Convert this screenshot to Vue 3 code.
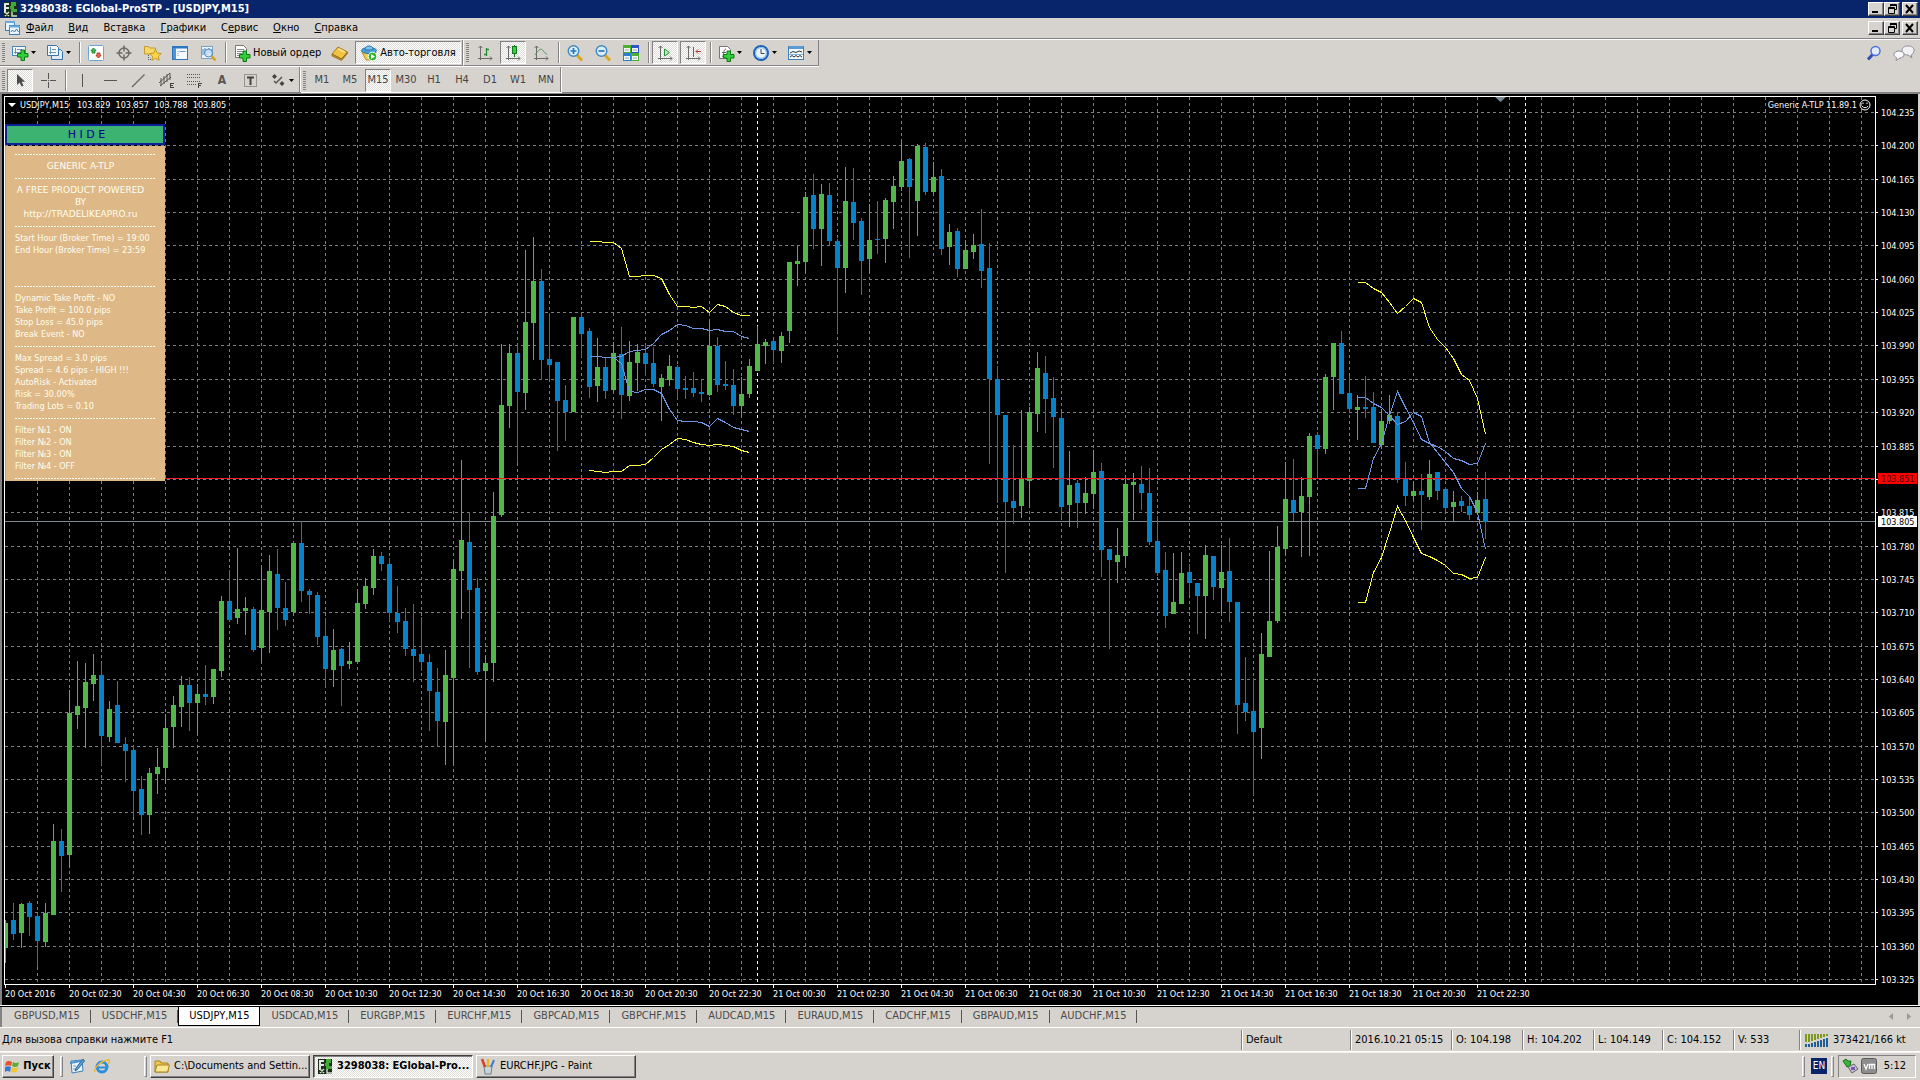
<script setup>
const icons = {
  logo: '<rect x="1" y="1" width="14" height="15" fill="#1d2b1d"/><path d="M2 2h5v2H4v2h3v2H4v4H2z" fill="#dfe8dc"/><path d="M9 1h5v4h-2v3h3v3H9V8H8V5h1z" fill="#3faa35"/><path d="M3 11l4 4M7 11l-4 4M10 11v4h5" stroke="#cfe8c8" stroke-width="1.4" fill="none"/>',
  chartWin: '<rect x="1.500" y="1.500" width="9" height="9" fill="#eaf4fc" stroke="#3c80bd"/><path d="M1 2h10" stroke="#6aa9dc" stroke-width="2"/><rect x="5.500" y="5.500" width="10" height="9" fill="#eaf4fc" stroke="#3c80bd"/><path d="M5 6.500h11" stroke="#6aa9dc" stroke-width="2"/><path d="M7 12l1.500-2 2 2 2-3 2 3" stroke="#3c80bd" fill="none"/>',
  newChart: '<rect x=".5" y="1.500" width="13" height="9" fill="#f4f9fd" stroke="#4a86ba"/><path d="M3.500 3v6M2 7.500h9M5 4.500h5" stroke="#6b93b5" fill="none"/><path d="M9 5h3.500v3.500H16V12h-3.500v3.500H9V12H5.500V8.500H9z" fill="#2fd038" stroke="#0b7a14"/>',
  profiles: '<path d="M4.500 4.500h9l2 2v8h-11z" fill="#dcebf7" stroke="#3c74a8"/><path d="M.5.5h9l2 2v8H.5z" fill="#f4f9fd" stroke="#3c74a8"/><path d="M3.500 2v7M2 7.500h7M5 4.500h4" stroke="#6b93b5" fill="none"/>',
  market: '<rect x=".5" y=".5" width="15" height="15" rx="1" fill="#fff" stroke="#6aa6dc"/><path d="M5.500 3L8 5.500H7V8H4V5.500H3z" fill="#3cc04a" stroke="#15762a" stroke-width=".8"/><path d="M10.500 13L8 10.500h1V8h3v2.500h1z" fill="#f0684a" stroke="#a82a16" stroke-width=".8"/>',
  cross: '<circle cx="8" cy="8" r="5" fill="none" stroke="#6a6a6a" stroke-width="1.500"/><path d="M8 .5v6M8 9.500v6M.5 8h6M9.500 8h6" stroke="#6a6a6a" stroke-width="1.500"/>',
  favorites: '<path d="M.5 1.500h4l1 1.500h6v6H.5z" fill="#f6d869" stroke="#c39a2c"/><path d="M4.500 10v5M4 14.500h3" stroke="#555" stroke-dasharray="1 1"/><path d="M11.500 4.500l1.700 3.600 4 .5-2.900 2.700.8 4-3.600-2-3.600 2 .7-4-2.800-2.700 4-.5z" fill="#fbd743" stroke="#b98a1a" stroke-width=".8"/>',
  terminal: '<rect x=".5" y="1.500" width="15" height="13" fill="#f4faff" stroke="#2e77bd"/><path d="M1 2.500h14" stroke="#2e77bd" stroke-width="2"/><rect x="1" y="3" width="3" height="11" fill="#4d94d6"/><path d="M5.500 6.500h1m1 0h6M5.500 8.500h1M5.500 10.500h1" stroke="#6f9cc4"/>',
  tester: '<rect x="1.500" y="1.500" width="11" height="12" fill="#f0f6fb" stroke="#7aa2c6"/><path d="M3 4v6M5 3v6M7 5v5M9 3v5M11 4v5" stroke="#3c80bd"/><circle cx="8.500" cy="8" r="4" fill="#cfe6f7" fill-opacity=".8" stroke="#4a88bf"/><path d="M11.500 11l4 4.500" stroke="#d3a21d" stroke-width="2.500"/>',
  newOrder: '<path d="M1.500.5h8l3 3v9h-11z" fill="#fff" stroke="#777"/><path d="M3 4.500h7M3 6.500h8M3 8.500h5M3 10.500h5" stroke="#888"/><path d="M9 6h3.500v3.500H16V13h-3.500v3.500H9V13H5.500V9.500H9z" fill="#2fd038" stroke="#0b7a14"/>',
  book: '<path d="M6 2l9.500 5-6 7L0 9z" fill="#f2c443" stroke="#a8791a"/><path d="M0 9v2l9.500 4.500 6-7V7l-6 7z" fill="#c98e20" stroke="#8d6414" stroke-width=".7"/><path d="M6.500 4l6 3" stroke="#fbe69a" stroke-width="1.500"/>',
  auto: '<path d="M1 7l7-2 7 2-4 8H5z" fill="#f0cf4f" stroke="#b58f1c"/><ellipse cx="8" cy="5.500" rx="7.500" ry="3" fill="#4aa4dc" stroke="#2a6fa5"/><path d="M4 4c0-4 8-4 8 0v1H4z" fill="#7cc4ee" stroke="#2a6fa5"/><circle cx="11.500" cy="11.500" r="4.300" fill="#29b42e" stroke="#fff"/><path d="M10 9l4 2.500-4 2.500z" fill="#fff"/>',
  bars: '<path d="M3.500 1v14M1 13.500h14M1.500 3l2-2 2 2M13 11.500l2 2-2 2" stroke="#6b6b6b" fill="none"/><path d="M9.500 3v8M9.500 4.500H12M7 9.500h2.500" stroke="#278a35" stroke-width="1.300" fill="none"/>',
  candles: '<path d="M3.500 1v14M1 13.500h14M1.500 3l2-2 2 2M13 11.500l2 2-2 2" stroke="#6b6b6b" fill="none"/><path d="M9.500 0v12" stroke="#14791d"/><rect x="7.500" y="1.500" width="4" height="7" fill="#2ed43a" stroke="#14791d"/>',
  lineChart: '<path d="M3.500 1v14M1 13.500h14M1.500 3l2-2 2 2M13 11.500l2 2-2 2" stroke="#6b6b6b" fill="none"/><path d="M2 10C6 4 8 3 10 5.500c1 2 2 2 4 4" stroke="#4c9a57" fill="none"/>',
  zoomIn: '<path d="M10 10l5 5.500" stroke="#d8a822" stroke-width="3"/><circle cx="6.500" cy="6" r="5.300" fill="#d9eefb" stroke="#3f88c5" stroke-width="1.400"/><path d="M3.500 6h6M6.500 3v6" stroke="#2c75b8" stroke-width="1.700"/>',
  zoomOut: '<path d="M10 10l5 5.500" stroke="#d8a822" stroke-width="3"/><circle cx="6.500" cy="6" r="5.300" fill="#d9eefb" stroke="#3f88c5" stroke-width="1.400"/><path d="M3.500 6h6" stroke="#2c75b8" stroke-width="1.700"/>',
  tile: '<rect width="8" height="8" fill="#4caf32"/><rect x="8" width="8" height="8" fill="#2b55c8"/><rect y="8" width="8" height="8" fill="#2b7ed0"/><rect x="8" y="8" width="8" height="8" fill="#4caf32"/><path d="M1 3h6v4H1zM9 3h6v4H9zM1 11h6v4H1zM9 11h6v4H9z" fill="#f1f8f1"/><path d="M2 5h4M10 5h4M2 13h4M10 13h4" stroke="#9ab"/>',
  scroll: '<path d="M3.500 1v14M1 13.500h14M1.500 3l2-2 2 2M13 11.500l2 2-2 2" stroke="#6b6b6b" fill="none"/><path d="M7.500 4l5 3.500-5 3.500z" fill="#bfe6c2" stroke="#2c9438"/>',
  shift: '<path d="M3.500 1v14M1 13.500h14M1.500 3l2-2 2 2M13 11.500l2 2-2 2" stroke="#6b6b6b" fill="none"/><path d="M8.500 2v10" stroke="#666"/><path d="M16 6.500h-5M13 4.500l-2 2 2 2" stroke="#b5382a" fill="none"/>',
  indicators: '<path d="M1.500 1.500h8l3 3v9h-11z" fill="#fff" stroke="#777"/><path d="M4 12c2 0 1-8 4-8M4 7.500h4" stroke="#666" fill="none"/><path d="M9 6h3.500v3.500H16V13h-3.500v3.500H9V13H5.500V9.500H9z" fill="#2fd038" stroke="#0b7a14"/>',
  clock: '<circle cx="8" cy="8" r="7" fill="#fff" stroke="#1f63b8" stroke-width="2"/><circle cx="8" cy="8" r="5.400" fill="#eaf4fd" stroke="#6fb0ea"/><path d="M8 4v4.500h3.500" stroke="#444" fill="none"/>',
  template: '<rect x=".5" y="1.500" width="15" height="13" fill="#f2f8fd" stroke="#3c80bd"/><path d="M1 2.500h14" stroke="#5b9ad4" stroke-width="3"/><path d="M2 8l3-1.500 3 1 3-1.500 3 1M2 12l2-1.500 2 1.500 2-1.500 2 1.500 2-1.500 2 1.500" stroke="#333" fill="none"/><path d="M1 9.500h14" stroke="#8bb4d8"/>',
  cursor: '<path d="M5 2v11l2.600-2.400L9.500 14.500l2-1-1.900-3.800H13z" fill="#4a4a4a"/>',
  plus: '<path d="M8.500 1v6M8.500 10v6M1 8.500h6M10 8.500h6M8 8.500h1" stroke="#555"/>',
  vline: '<path d="M8.500 2v13" stroke="#555"/>',
  hline: '<path d="M2 8.500h13" stroke="#555"/>',
  trend: '<path d="M2 15L14.500 2.500" stroke="#666" stroke-width="1.200"/>',
  channel: '<path d="M1 11L12 1M2 14L13 5M3 6v8M6 4v8M9 2v8M12 1v7" stroke="#555" fill="none"/><path d="M12.500 11v5M12 11.500h4M12 13.500h3M12 15.500h4" stroke="#444" fill="none"/>',
  fibo: '<path d="M1 2.500h14M1 5.500h14M1 9.500h14M1 12.500h9" stroke="#555" stroke-dasharray="1 1"/><path d="M12.500 11v5M12 11.500h4M12 13.500h3" stroke="#444" fill="none"/>',
  textLabel: '<rect x="2.500" y="2.500" width="12" height="12" fill="none" stroke="#555" stroke-dasharray="1 1"/><path d="M5 5.500h7M8.500 5v8" stroke="#444" stroke-width="2"/>',
  arrows: '<path d="M4.500 2L7 4.500 4.500 7 2 4.500zM12 9l2.500 2.500L12 14l-2.500-2.500z" fill="#444"/><path d="M4 9l2 2 6-6" stroke="#555" stroke-width="1.500" fill="none"/>',
  search: '<path d="M7 9l-5 5.500" stroke="#2f4fb8" stroke-width="3"/><circle cx="9.500" cy="6" r="4.500" fill="#e3ebfb" stroke="#4a72d8" stroke-width="1.500"/>',
  note: '<path d="M2 3l11-1 1 11-11 2z" fill="#e9f3fb" stroke="#3f7fb5"/><path d="M1 5l11-2" stroke="#4d93cc" stroke-width="2"/><path d="M14 1L7 10l-1 3 2.500-1.500L15.500 3z" fill="#5aa3dd" stroke="#2d6596"/><path d="M4 8h3M4 11h2" stroke="#6b9cc2"/>',
  ie: '<circle cx="8" cy="9" r="5" fill="none" stroke="#2b8fdc" stroke-width="3"/><path d="M4 9.500h10" stroke="#2b8fdc" stroke-width="2"/><path d="M1 14C-1 10 8 2 15 2c1 1 0 3-1 4" stroke="#efb62f" stroke-width="1.300" fill="none"/>',
  folder: '<path d="M1 3h5l1 2h7v9H1z" fill="#efc94c" stroke="#a9821c"/><path d="M3 7h12.500l-2 7H1z" fill="#fbe894" stroke="#a9821c"/>',
  paint: '<path d="M4 8h8l-1 8H5z" fill="#c8d4dc" stroke="#71808a"/><path d="M5 9L2 1" stroke="#d3402e" stroke-width="2.500"/><path d="M8 9V1" stroke="#e9b72c" stroke-width="2.500"/><path d="M11 9l3-7" stroke="#3b7fc9" stroke-width="2"/>',
  flag: '<path d="M1 4q3-2 6 0l-1 4q-3-1.500-6 0z" fill="#e8502c"/><path d="M8 4q3 2 6 0l-1 4q-3 2-6 0z" fill="#5fae34"/><path d="M0 9q3-1.500 6 0l-1 5q-2.500-2-5 0z" fill="#3478d8"/><path d="M7 9q3 2 6 0l-1 4.500q-3 2-6 0z" fill="#f3c52f"/>',
  plug: '<path d="M1 3l3-2 2 2 3 0-1 5-3 1z" fill="#37b53a" stroke="#1d6e20"/><path d="M6 9l6-3 4 5-6 4z" fill="#c3c3d0" stroke="#666"/><rect x="9" y="9" width="4" height="3" fill="#7b59b8"/>',
  vm: '<rect x=".5" y=".5" width="15" height="15" rx="2" fill="#8d8d8d" stroke="#5c5c5c"/><path d="M3 6l2 5 2-5M8.500 11V6.500h5V11M11 7v4" stroke="#fff" stroke-width="1.300" fill="none"/>',
  net: '<path d="M1 1v8M4 1v8M7 1v7M10 1v6M13 1v5M16 1v4M19 1v3M22 1v2" stroke="#7d9a1e" stroke-width="2"/><path d="M1 14v-3M4 14v-3M7 14v-4M10 14V9M13 14V8M16 14V7M19 14V6M22 14V5" stroke="#1d5f96" stroke-width="2"/>'
}

const menus = [['', 'Ф', 'айл'], ['', 'В', 'ид'], ['Вст', 'а', 'вка'], ['', 'Г', 'рафики'], ['С', 'е', 'рвис'], ['', 'О', 'кно'], ['', 'С', 'правка']]
const mainTools = [
  { i: 'newChart', t: 'Новый график', drop: 1 }, { i: 'profiles', t: 'Профили', drop: 1 }, { sep: 1 },
  { i: 'market', t: 'Обзор рынка' }, { i: 'cross', t: 'Окно данных' }, { i: 'favorites', t: 'Навигатор' }, { i: 'terminal', t: 'Терминал' }, { i: 'tester', t: 'Тестер стратегий' }, { sep: 1 },
  { i: 'newOrder', t: 'Новый ордер', label: 1 }, { i: 'book', t: 'MetaEditor' }, { i: 'auto', t: 'Авто-торговля', label: 1, on: 1 }
]
const viewTools = [
  { i: 'bars', t: 'Бары' }, { i: 'candles', t: 'Свечи', on: 1 }, { i: 'lineChart', t: 'Линия' }, { sep: 1 },
  { i: 'zoomIn', t: 'Увеличить' }, { i: 'zoomOut', t: 'Уменьшить' }, { i: 'tile', t: 'Упорядочить окна' }, { sep: 1 },
  { i: 'scroll', t: 'Автопрокрутка', on: 1 }, { i: 'shift', t: 'Сдвиг графика', on: 1 }, { sep: 1 },
  { i: 'indicators', t: 'Индикаторы', drop: 1 }, { i: 'clock', t: 'Периоды', drop: 1 }, { i: 'template', t: 'Шаблоны', drop: 1 }
]
const drawTools = [
  { i: 'cursor', t: 'Курсор', on: 1 }, { i: 'plus', t: 'Перекрестие' }, { sep: 1 }, { i: 'vline', t: 'Вертикальная линия' },
  { i: 'hline', t: 'Горизонтальная линия' }, { i: 'trend', t: 'Трендовая линия' }, { i: 'channel', t: 'Канал' }, { i: 'fibo', t: 'Фибоначчи' },
  { text: 'A', t: 'Текст', bold: 1 }, { i: 'textLabel', t: 'Метка' }, { i: 'arrows', t: 'Стрелки', drop: 1 }
]
const periodTools = ['M1', 'M5', 'M15', 'M30', 'H1', 'H4', 'D1', 'W1', 'MN'].map(p => ({ text: p, t: p, on: p === 'M15' }))
const toolRows = [[mainTools, viewTools], [drawTools, periodTools]]

const tabs = ['GBPUSD', 'USDCHF', 'USDJPY', 'USDCAD', 'EURGBP', 'EURCHF', 'GBPCAD', 'GBPCHF', 'AUDCAD', 'EURAUD', 'CADCHF', 'GBPAUD', 'AUDCHF']
const cells = [
  ['Default', 109], ['2016.10.21 05:15', 101], ['O: 104.198', 71], ['H: 104.202', 71], ['L: 104.149', 69], ['C: 104.152', 71], ['V: 533', 66]
]

const panel = [
  '-', ['GENERIC A-TLP'], '-', ['A FREE PRODUCT POWERED'], ['BY'], ['http://TRADELIKEAPRO.ru'], '-',
  'Start Hour (Broker Time) = 19:00', 'End Hour (Broker Time) = 23:59', '', '', '-',
  'Dynamic Take Profit - NO', 'Take Profit = 100.0 pips', 'Stop Loss = 45.0 pips', 'Break Event - NO', '-',
  'Max Spread = 3.0 pips', 'Spread = 4.6 pips - HIGH !!!', 'AutoRisk - Activated', 'Risk = 30.00%', 'Trading Lots = 0.10', '-',
  'Filter №1 - ON', 'Filter №2 - ON', 'Filter №3 - ON', 'Filter №4 - OFF', '-'
]

// Vertical grid step is 0.035 in price, first level is 104.235
const levelY = n => Math.round(112 + n * 33.35)
const levels = Array.from({ length: 27 }, (_, n) => ({ y: levelY(n), label: (104.235 - n * 0.035).toFixed(3) }))
const columns = Array.from({ length: 118 }, (_, n) => 37 + n * 32)
const hours = ['00:30', '02:30', '04:30', '06:30', '08:30', '10:30', '12:30', '14:30', '16:30', '18:30', '20:30', '22:30']
const dates = ['20 Oct 2016', ...hours.slice(1).map(h => '20 Oct ' + h), ...hours.map(h => '21 Oct ' + h)]

// [rising, high, body top, body bottom, low]
const candles = [
  [1,920,923,948,963],[0,903,920,934,940],[1,903,904,933,948],[0,901,903,917,936],[0,913,916,941,967],[1,903,913,942,947],[1,824,841,915,915],[0,829,841,856,892],
  [1,690,713,855,867],[1,661,706,715,729],[1,663,682,708,748],[1,654,675,684,701],[0,663,675,736,765],[1,701,709,737,742],[0,681,705,743,743],[0,737,744,751,782],
  [0,746,750,791,817],[0,776,789,815,835],[1,768,773,815,834],[1,748,767,774,794],[1,714,728,768,783],[1,696,705,727,748],[1,676,685,707,727],[0,677,685,703,731],
  [1,684,694,703,734],[0,665,694,697,705],[1,669,669,697,704],[1,596,601,671,677],[0,570,601,620,621],[1,548,609,618,624],[1,597,608,611,635],[0,607,609,650,652],
  [1,568,610,648,662],[1,555,571,612,653],[0,549,574,608,630],[0,582,608,620,626],[1,543,543,612,614],[0,521,543,591,602],[0,589,591,595,614],[0,592,595,637,645],
  [0,618,636,669,687],[1,629,650,670,687],[0,648,649,666,706],[1,642,661,664,669],[1,592,603,662,663],[1,578,586,604,609],[1,549,556,588,595],[0,552,556,564,571],
  [0,558,564,613,621],[0,586,613,622,633],[0,608,621,649,656],[0,604,649,656,682],[0,617,654,662,671],[0,654,662,691,731],[0,668,692,721,746],[1,650,675,722,765],
  [1,561,569,678,765],[1,460,540,571,619],[0,512,542,590,668],[0,578,588,672,675],[1,655,663,671,742],[1,492,516,663,682],[1,344,405,515,517],[1,344,353,406,428],
  [0,345,353,392,463],[1,250,322,393,410],[1,237,281,323,360],[0,269,281,360,380],[0,313,359,365,380],[0,362,362,401,451],[0,385,400,412,441],[1,317,317,412,412],
  [0,314,317,334,357],[0,328,331,387,398],[1,338,367,386,402],[0,358,367,391,399],[1,342,353,390,392],[0,327,354,395,419],[1,341,362,396,401],[1,344,352,363,391],
  [0,345,353,364,376],[0,347,363,384,387],[1,374,378,387,421],[1,355,366,380,386],[0,365,367,389,399],[0,376,388,390,399],[0,372,388,393,397],[0,380,392,394,402],
  [1,322,346,395,396],[0,337,346,385,392],[0,361,384,386,390],[0,369,385,406,415],[1,377,394,406,415],[1,359,366,394,398],[1,326,344,371,371],[1,339,342,346,364],
  [0,340,341,350,363],[1,332,336,351,363],[1,262,262,331,343],[1,245,261,264,286],[1,192,197,262,273],[0,174,195,229,249],[1,184,194,229,266],[0,183,195,241,245],
  [0,239,241,268,333],[1,167,201,268,293],[0,168,202,223,240],[0,218,221,261,295],[1,204,240,259,273],[0,201,239,240,254],[1,198,200,239,263],[1,176,186,202,229],
  [1,142,161,187,191],[0,158,159,187,258],[1,144,146,201,236],[0,143,147,192,195],[1,162,177,192,194],[0,169,176,249,255],[1,224,232,247,265],[0,228,231,269,277],
  [1,240,250,269,269],[1,234,245,252,259],[0,209,244,271,288],[0,243,268,379,464],[0,366,379,415,503],[0,415,415,502,573],[0,445,501,508,524],[1,410,478,506,518],
  [1,407,412,481,508],[1,352,368,414,432],[0,356,373,399,433],[0,377,398,417,468],[0,413,418,507,519],[1,451,485,505,527],[0,480,483,503,528],[1,477,493,503,514],
  [1,450,472,494,509],[0,463,471,550,577],[0,549,549,560,649],[1,528,555,562,583],[1,475,484,556,566],[1,473,482,485,520],[0,466,484,493,510],[0,468,493,542,545],
  [0,516,541,573,576],[0,552,570,616,628],[1,553,602,614,614],[1,552,573,604,604],[0,564,572,583,595],[0,583,583,596,634],[1,545,555,596,639],[0,556,556,587,600],
  [1,545,572,588,614],[0,538,571,602,622],[0,602,602,705,734],[0,657,703,712,721],[0,678,711,732,795],[1,633,654,728,759],[1,551,621,657,657],[1,526,547,621,623],
  [1,462,499,549,555],[0,459,500,513,521],[1,477,496,512,557],[1,433,436,497,556],[0,432,435,449,479],[1,374,377,449,454],[1,343,343,377,410],[0,331,343,394,394],
  [0,376,393,409,412],[1,395,407,410,440],[0,376,407,409,418],[0,392,407,443,443],[1,409,421,445,449],[1,395,415,421,424],[0,413,416,480,483],[0,462,479,496,506],
  [1,482,491,496,500],[0,474,491,495,530],[1,460,474,497,500],[0,472,472,491,500],[0,487,489,508,511],[1,491,502,507,522],[0,496,501,506,512],[0,496,506,515,520],
  [1,492,500,513,515],[0,472,499,522,539]
].map(([up, high, top, bottom, low], k) => ({ x: 5 + k * 8, up, high, top, bottom, low }))

// Indicator bands: colour class, first candle index, one level per candle
const bands = [
  ['outer', 73, [241,241,242,242,248,276,276,275,275,278,294,306,306,307,306,312,304,306,312,315,315]],
  ['inner', 73, [356,356,357,357,356,351,350,349,343,334,330,324,325,328,328,330,329,331,331,336,338]],
  ['inner', 73, [356,356,357,357,363,391,392,389,389,393,409,420,421,421,422,426,418,422,427,429,431]],
  ['outer', 73, [470,471,472,471,471,465,465,464,457,449,444,438,439,442,444,445,444,445,446,450,452]],
  ['outer', 169, [282,282,288,292,302,313,306,298,302,327,339,347,358,374,380,398,434]],
  ['outer', 169, [602,602,572,557,532,506,520,537,553,556,560,565,573,574,578,577,557]],
  ['inner', 169, [397,397,403,407,415,424,421,412,416,442,452,462,472,488,496,512,549]],
  ['inner', 169, [488,488,458,443,415,391,407,422,439,443,446,451,458,460,464,463,443]]
].map(([kind, start, ys]) => ({ kind, points: ys.map((y, n) => `${5 + (start + n) * 8},${y}`).join(' ') }))
</script>

<template>
  <div class="screen">
    <header class="titlebar">
      <svg class="ico" viewBox="0 0 16 16" v-html="icons.logo"></svg>
      <h1>3298038: EGlobal-ProSTP - [USDJPY,M15]</h1>
      <div class="winctl">
        <button aria-label="Свернуть"><svg viewBox="0 0 12 10"><path d="M2 8h6" stroke="#000" stroke-width="2" /></svg></button>
        <button aria-label="Восстановить"><svg viewBox="0 0 12 10"><path d="M4 .5h6.500v5H8M4.500.5v2M4 1.500h6M2.500 3.500h6v6h-6zM2 4.500h6" stroke="#000" fill="none" /></svg></button>
        <button class="close" aria-label="Закрыть"><svg viewBox="0 0 12 10"><path d="M2 1l7 8M9 1L2 9" stroke="#000" stroke-width="2" /></svg></button>
      </div>
    </header>

    <nav class="menubar">
      <svg class="ico" viewBox="0 0 16 16" v-html="icons.chartWin"></svg>
      <button v-for="m in menus" :key="m.join('')">{{ m[0] }}<u>{{ m[1] }}</u>{{ m[2] }}</button>
      <div class="winctl">
        <button aria-label="Свернуть окно"><svg viewBox="0 0 12 10"><path d="M2 8h6" stroke="#000" stroke-width="2" /></svg></button>
        <button aria-label="Восстановить окно"><svg viewBox="0 0 12 10"><path d="M4 .5h6.500v5H8M4.500.5v2M4 1.500h6M2.500 3.500h6v6h-6zM2 4.500h6" stroke="#000" fill="none" /></svg></button>
        <button class="close" aria-label="Закрыть окно"><svg viewBox="0 0 12 10"><path d="M2 1l7 8M9 1L2 9" stroke="#000" stroke-width="2" /></svg></button>
      </div>
    </nav>

    <div class="toolarea">
      <div v-for="(row, r) in toolRows" :key="r" class="toolrow">
        <div v-for="(group, g) in row" :key="g" class="group">
          <i class="grip"></i>
          <template v-for="(b, n) in group" :key="n">
            <i v-if="b.sep" class="sep"></i>
            <button v-else :aria-label="b.t" :class="{ on: b.on, drop: b.drop, labelled: b.label, bold: b.bold }">
              <svg v-if="b.i" class="ico" viewBox="0 0 16 16" v-html="icons[b.i]"></svg>
              <span v-if="b.label">{{ b.t }}</span>
              <template v-if="b.text">{{ b.text }}</template>
              <svg v-if="b.drop" class="caret" viewBox="0 0 5 3"><path d="M0 0h5L2.500 3z" /></svg>
            </button>
          </template>
        </div>
        <div v-if="r === 0" class="right-tools">
          <button aria-label="Поиск"><svg class="ico" viewBox="0 0 16 16" v-html="icons.search"></svg></button>
          <button aria-label="Чат">
            <svg class="chat" viewBox="0 0 22 16"><path d="M15 1c4 0 6 2 6 4.500S19 10 18 10l1 3-4-3c-4 0-6-2-6-4.500S11 1 15 1z" fill="#f2f2f6" stroke="#8c8c94" /><path d="M6 6c3 0 5 1.500 5 3.500S9 13 7 13l-4 2.500.5-3C2 12 1 11 1 9.500 1 7.500 3 6 6 6z" fill="#fafafc" stroke="#8c8c94" /></svg>
          </button>
        </div>
      </div>
    </div>

    <main class="chart">
      <div class="plot">
        <svg class="canvas" aria-label="USDJPY M15">
          <g transform="translate(-5 -97)">
            <g class="grid">
              <line v-for="x in columns" :key="'x' + x" :x1="x + .5" :x2="x + .5" y1="97" y2="984" />
              <line v-for="l in levels" :key="'y' + l.y" x1="5" x2="3800" :y1="l.y + .5" :y2="l.y + .5" />
            </g>
            <g class="days">
              <line x1="757.500" x2="757.500" y1="97" y2="984" />
              <line x1="1525.500" x2="1525.500" y1="97" y2="984" />
            </g>
            <rect class="bid" x="5" y="521" width="3800" height="1" />
            <g v-for="c in candles" :key="c.x" :class="c.up ? 'up' : 'down'">
              <rect :x="c.x" :y="c.high" width="1" :height="c.low - c.high" />
              <rect :x="c.x - 2" :y="c.top" width="5" :height="c.bottom - c.top" />
            </g>
            <rect class="ask" x="5" y="478" width="3800" height="1" />
            <g transform="translate(.5 .5)">
              <polyline v-for="(b, n) in bands" :key="n" :class="b.kind" :points="b.points" />
            </g>
            <path d="M1495 97h11l-5.500 5z" fill="#778899" />
          </g>
        </svg>
        <div class="overlay">
          <div class="caption">
            <svg class="tri" viewBox="0 0 8 4"><path d="M0 0h8L4 4z" /></svg>
            <span>USDJPY,M15&nbsp;&nbsp; 103.829&nbsp; 103.857&nbsp; 103.788&nbsp; 103.805</span>
            <span class="expert">Generic A-TLP 11.89.1
              <svg viewBox="0 0 12 12"><circle cx="6" cy="6" r="5" /><path d="M3 7q3 3.500 6 0M4 3.500v1.500M8 3.500v1.500" /></svg>
            </span>
          </div>
          <section class="advisor">
            <button>H I D E</button>
            <div class="info">
              <template v-for="(p, n) in panel" :key="n">
                <hr v-if="p === '-'">
                <p v-else-if="Array.isArray(p)" class="mid">{{ p[0] }}</p>
                <p v-else>{{ p }}</p>
              </template>
            </div>
          </section>
        </div>
      </div>
      <svg class="prices">
        <g transform="translate(0 -96)">
          <template v-for="l in levels" :key="l.y">
            <rect x="0" :y="l.y" width="2" height="1" />
            <text v-if="l.label !== '103.850'" x="5" :y="l.y + 4">{{ l.label }}</text>
          </template>
          <rect x="2" y="473" width="39" height="11" class="askbox" />
          <text x="5" y="482" class="asktext">103.851</text>
          <rect x="2" y="516" width="39" height="11" />
          <text x="5" y="525" class="bidtext">103.805</text>
        </g>
      </svg>
      <ol class="dates">
        <li v-for="d in dates" :key="d">{{ d }}</li>
      </ol>
    </main>

    <nav class="tabs">
      <button v-for="t in tabs" :key="t" :class="{ active: t === 'USDJPY' }">{{ t }},M15</button>
      <div class="scrollers">
        <button aria-label="Назад"><svg viewBox="0 0 4 7"><path d="M4 0v7L0 3.500z" /></svg></button>
        <button aria-label="Вперёд"><svg viewBox="0 0 4 7"><path d="M0 0v7l4-3.500z" /></svg></button>
      </div>
    </nav>

    <footer class="status">
      <span class="hint">Для вызова справки нажмите F1</span>
      <span v-for="c in cells" :key="c[0]" class="cell" :style="{ width: c[1] + 'px' }">{{ c[0] }}</span>
      <span class="cell net"><svg viewBox="0 0 24 15" v-html="icons.net"></svg>373421/166 kt</span>
    </footer>

    <div class="taskbar">
      <button class="start"><svg class="ico" viewBox="0 0 16 16" v-html="icons.flag"></svg>Пуск</button>
      <i class="ridge"></i>
      <div class="quick">
        <button aria-label="Рабочий стол"><svg class="ico" viewBox="0 0 16 16" v-html="icons.note"></svg></button>
        <button aria-label="Internet Explorer"><svg class="ico" viewBox="0 0 16 16" v-html="icons.ie"></svg></button>
      </div>
      <i class="ridge"></i>
      <button class="task"><svg class="ico" viewBox="0 0 16 16" v-html="icons.folder"></svg>C:\Documents and Settin...</button>
      <button class="task current"><svg class="ico" viewBox="0 0 16 16" v-html="icons.logo"></svg>3298038: EGlobal-Pro...</button>
      <button class="task"><svg class="ico" viewBox="0 0 16 16" v-html="icons.paint"></svg>EURCHF.JPG - Paint</button>
      <div class="fill"></div>
      <i class="ridge"></i>
      <button class="lang">EN</button>
      <i class="ridge"></i>
      <div class="tray">
        <svg class="ico" viewBox="0 0 16 16" v-html="icons.plug"></svg>
        <svg class="ico" viewBox="0 0 16 16" v-html="icons.vm"></svg>
        <time>5:12</time>
      </div>
    </div>
  </div>
</template>

<style>
body { margin: 0; background: #d6d3ce; }
</style>

<style scoped>
.screen { display: flex; flex-direction: column; min-height: 100vh; background: #d6d3ce; color: #000; font: 11px/14px "DejaVu Sans Condensed", "DejaVu Sans", sans-serif; cursor: default; white-space: nowrap; }
* { box-sizing: border-box; }
button { margin: 0; padding: 0; border: 0; background: none; color: inherit; font: inherit; display: flex; align-items: center; justify-content: center; }
.ico { width: 16px; height: 16px; flex: none; overflow: visible; }

.titlebar { display: flex; align-items: center; height: 18px; padding: 0 2px; background: #08246b; color: #fff; }
.titlebar h1 { margin: 0; padding-left: 2px; font-size: 11px; font-weight: bold; }
.winctl { display: flex; margin-left: auto; }
.winctl button { width: 16px; height: 14px; background: #d6d3ce; border: 1px solid; border-color: #fff #404040 #404040 #fff; box-shadow: inset -1px -1px #848284; }
.winctl svg { width: 12px; height: 10px; }
.winctl .close { margin-left: 2px; }

.menubar { display: flex; align-items: center; height: 21px; padding: 0 2px 1px 4px; border-bottom: 1px solid #848284; }
.menubar > button { padding: 0 8px 0 7px; height: 16px; display: block; }
.menubar > .ico { margin-right: -1px; }

.toolarea { border-top: 1px solid #fff; border-bottom: 2px solid #848284; }
.toolrow { display: flex; height: 27px; }
.toolrow:last-child { height: 25px; }
.toolrow:last-child .group { padding-top: 1px; }
.group { display: flex; align-items: center; border-right: 1px solid #848284; }
.toolrow:first-child .group { border-bottom: 1px solid #848284; box-shadow: 0 1px #fff; height: 26px; }
.group + .group { border-left: 1px solid #fff; }
.toolrow .group:last-of-type { box-shadow: 1px 1px #fff; }
.grip { width: 4px; height: 19px; margin: 0 1px; background: repeating-linear-gradient(#848284 0 1px, transparent 1px 2px); border-left: 1px solid #d6d3ce; }
.group + .group .grip { margin-right: 2px; }
.sep { width: 6px; height: 21px; background: linear-gradient(90deg, #848284 50%, #fff 50%) 3px 0 / 2px 100% no-repeat; }
.group button { width: 26px; height: 23px; margin: 0 1px; color: #444; }
.group .drop { width: 35px; margin: 0; gap: 3px; }
.group .labelled { width: auto; padding: 0 4px 0 5px; gap: 3px; color: #000; }
.group .bold { font-size: 12px; font-weight: bold; color: #555; }
.group .on { border: 1px solid; border-color: #848284 #fff #fff #848284; background: repeating-conic-gradient(#fff 0 25%, #dedcd8 0 50%) 0 0 / 2px 2px; }
.caret { width: 5px; height: 3px; }
.right-tools { display: flex; gap: 11px; height: 25px; margin-left: auto; padding-right: 5px; }
.chat { width: 22px; height: 16px; }

.chart { flex: 1; display: grid; grid-template: minmax(889px, 1fr) 20px / minmax(0, 1fr) 42px; padding: 2px 0 0 2px; border: solid #d6d3ce; border-width: 0 2px 0 0; border-left: 2px solid #848284; background: #000; color: #fff; font-size: 9px; line-height: 12px; }
.plot { display: grid; grid-template: minmax(0, 1fr) / minmax(0, 1fr); border: 1px solid #fff; overflow: hidden; }
.canvas, .overlay { grid-area: 1 / 1; width: 100%; height: 100%; }
.grid line, .days line { stroke: #778088; stroke-dasharray: 3 3; shape-rendering: crispEdges; }
.days .days line, .days line { stroke: #fff; }
.bid { fill: #808890; }
.ask { fill: #f51826; }
.up { fill: #50b748; }
.down { fill: #0682c6; }
polyline { fill: none; shape-rendering: crispEdges; }
.outer { stroke: #ffff3c; }
.inner { stroke: #6f94e0; }
.caption { display: flex; align-items: center; height: 15px; padding: 0 4px 0 3px; gap: 4px; }
.tri { width: 8px; height: 4px; fill: #fff; }
.expert { display: flex; align-items: center; gap: 2px; margin-left: auto; }
.expert svg { width: 12px; height: 12px; fill: none; stroke: #fff; }
.advisor { width: 160px; margin-top: 12px; }
.advisor button { width: 100%; height: 21px; padding-left: 3px; background: #3cb371; border: 2px solid #10209b; color: #00008b; font: 11px "DejaVu Sans", sans-serif; }
.info { margin-top: 1px; padding: 2px 13px 0 9px; background: #deb887; border-left: 1px solid #c5a274; color: #fffff0; height: 335px; overflow: hidden; }
.info p { margin: 0; height: 12px; }
.info .mid { padding-right: 6px; text-align: center; font-family: "DejaVu Sans", sans-serif; }
.info hr { width: 140px; height: 12px; margin: 0; border: 0; background: repeating-linear-gradient(90deg, #fffff0 0 2px, transparent 2px 3px) 0 6px / 100% 1px no-repeat; }
.prices { width: 42px; height: 100%; fill: #fff; overflow: hidden; }
.prices .askbox { fill: #f00; }
.prices .asktext { fill: #400; }
.prices .bidtext { fill: #000; }
.dates { grid-column: 1 / 3; display: flex; margin: 0; padding: 0 0 0 1px; list-style: none; overflow: hidden; }
.dates li { flex: none; width: 64px; height: 16px; padding-top: 3px; background: linear-gradient(#fff, #fff) 0 0 / 1px 3px no-repeat; }

.tabs { display: flex; height: 23px; border-top: 1px solid #fff; border-bottom: 1px solid #fff; color: #4a4a4a; padding: 0 0 1px 3px; box-shadow: inset 0 1px #000, inset 2px 0 #848284; }
.tabs > button { padding: 0 11px; margin-top: 1px; height: 18px; }
.tabs > button::after { content: ""; width: 1px; height: 13px; background: #555; margin-right: -11px; margin-left: 10px; }
.tabs > .active { background: #fff; color: #000; border: 1px solid #000; border-top: 0; height: 19px; padding: 0 10px; }
.tabs > .active::after { content: none; }
.scrollers { display: flex; align-items: center; gap: 14px; margin-left: auto; padding-right: 9px; }
.scrollers svg { width: 4px; height: 7px; fill: #9a9894; }

.status { display: flex; align-items: center; height: 24px; border-bottom: 1px solid #fff; }
.hint { flex: 1; padding-left: 2px; }
.cell { height: 20px; padding: 3px 0 0 4px; border-left: 1px solid #848284; box-shadow: inset 1px 0 #fff; }
.net { display: flex; width: 121px; gap: 4px; padding-left: 5px; }
.net svg { width: 24px; height: 15px; }

.taskbar { display: flex; align-items: center; height: 28px; padding: 1px 4px 2px 2px; border-top: 1px solid #f4f2ee; }
.start, .task { height: 23px; border: 1px solid; border-color: #fff #404040 #404040 #fff; box-shadow: inset -1px -1px #848284; }
.start { width: 52px; gap: 2px; font-weight: bold; }
.ridge { width: 3px; height: 21px; margin: 0 6px; border: 1px solid; border-color: #fff #848284 #848284 #fff; }
.quick { display: flex; gap: 9px; width: 75px; }
.quick + .ridge { margin: 0 3px 0 0; }
.task { flex: 0 1 160px; justify-content: flex-start; gap: 4px; padding: 0 3px; margin-right: 3px; overflow: hidden; }
.current { font-weight: bold; border-color: #404040 #fff #fff #404040; box-shadow: inset 1px 1px #848284; background: repeating-conic-gradient(#fff 0 25%, #dedcd8 0 50%) 0 0 / 2px 2px; }
.fill { flex: 1; }
.lang { width: 16px; height: 16px; background: #08246b; color: #fff; font-size: 10px; }
.lang + .ridge { margin: 0 4px; }
.tray { display: flex; align-items: center; width: 78px; height: 23px; gap: 3px; padding: 0 9px 0 3px; border: 1px solid; border-color: #848284 #fff #fff #848284; }
.tray time { margin-left: auto; }
</style>
